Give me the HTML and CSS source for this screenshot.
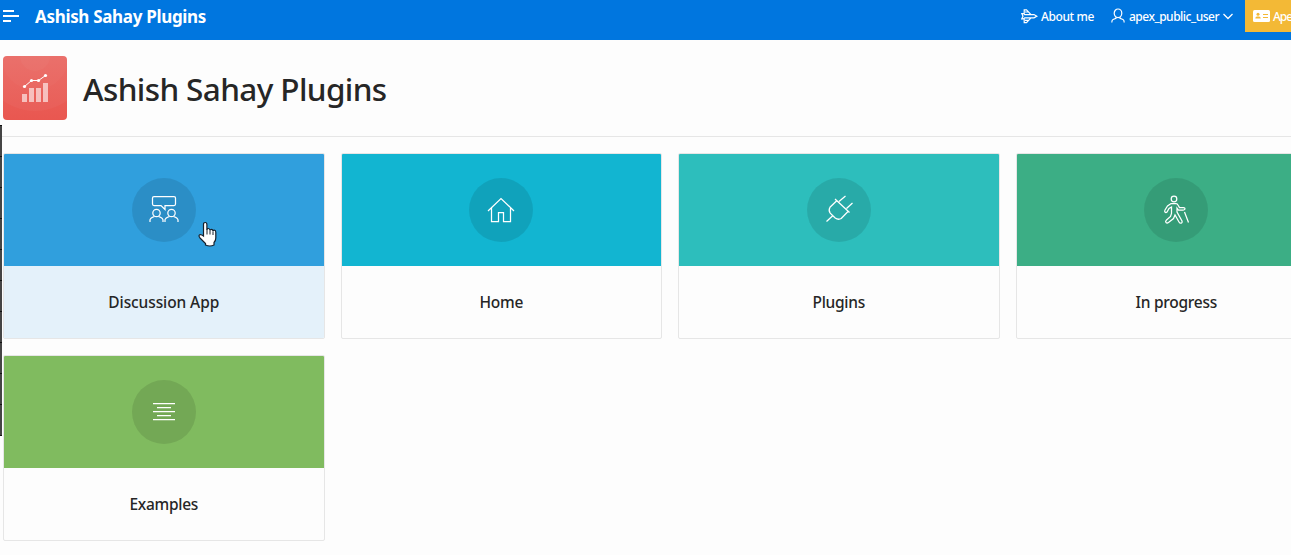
FILE: index.html
```html
<!DOCTYPE html>
<html lang="en">
<head>
<meta charset="utf-8">
<title>Ashish Sahay Plugins</title>
<link rel="stylesheet" href="styles.css">
</head>
<body>
<header class="topbar">
  <svg class="menu" width="16" height="14" viewBox="0 0 16 14"><path d="M0 2h11M0 7h16M0 12h8" stroke="#fff" stroke-width="1.8"/></svg>
  <span class="brand">Ashish Sahay Plugins</span>
  <nav class="nav">
    <span class="nav-item about">
      <svg width="17" height="16" viewBox="0 0 17 16" fill="none" stroke="#fff" stroke-width="1.2"><path d="M.8 5.600h1.700l1.300 1H13L15.800 8.200 13 9.800H3.800l-1.300 1H.8L2 8.200zM3.200 6.500V1.800h2.300L10 6.600M3.200 9.900v4.700h2.300L10 9.800M4 4h3.500M4 12.400h3.500"/></svg>
      <span class="nav-label about-label">About me</span>
    </span>
    <span class="nav-item user">
      <svg width="14" height="16" viewBox="0 0 14 16" fill="none" stroke="#fff" stroke-width="1.200"><ellipse cx="7" cy="5.300" rx="3.800" ry="4.300"/><path d="M5 9v1.300l-3 1.200Q.8 12 .8 14.500M9 9v1.300l3 1.200q1.200.5 1.200 3"/></svg>
      <span class="nav-label user-label">apex_public_user</span>
      <svg class="chevron" width="10" height="7" viewBox="0 0 10 7" fill="none" stroke="#fff" stroke-width="1.300"><path d="M.5 1 5 5.500 9.500 1"/></svg>
    </span>
    <span class="nav-item apex">
      <svg width="17" height="12" viewBox="0 0 17 12"><rect width="17" height="12" rx="1.500" fill="#fff"/><circle cx="5" cy="4.300" r="1.500" fill="#f3b936"/><path d="M2.300 8.500q0-2 1.700-2h2q1.700 0 1.700 2z" fill="#f3b936"/><path d="M10 4.500h5M10 7.500h5" stroke="#f3b936" stroke-width="1.200"/></svg>
      <span class="nav-label">Ape</span>
    </span>
  </nav>
</header>
<div class="side-edge"></div>
<section class="hero">
  <div class="app-icon">
    <svg width="64" height="64" viewBox="0 0 64 64">
      <circle cx="32" cy="0" r="55" fill="#fff" opacity=".035"/><circle cx="32" cy="0" r="34" fill="#fff" opacity=".025"/><circle cx="32" cy="0" r="15" fill="#fff" opacity=".03"/>
      <path d="M19 38h5v8h-5zM26 32h5v14h-5zM33 32h5v14h-5zM40 27h5v19h-5z" fill="#fff" opacity=".6"/>
      <path d="M21.500 30.500 28.500 24.500h7l7-5" fill="none" stroke="#fff"/>
      <g fill="#fff"><circle cx="21.500" cy="30.500" r="1.600"/><circle cx="28.500" cy="24.500" r="1.600"/><circle cx="35.500" cy="24.500" r="1.600"/><circle cx="42.500" cy="19.500" r="1.600"/></g>
    </svg>
  </div>
  <h1 class="title">Ashish Sahay Plugins</h1>
</section>
<main class="cards">
  <article class="card active">
    <div class="card-top blue"><span class="disc">
      <svg width="32" height="32" viewBox="0 0 32 32"><path d="M6 2.500h20q1.500 0 1.500 1.500v6q0 1.500-1.500 1.500H17v4l-4-4H6q-1.500 0-1.500-1.500V4q0-1.500 1.500-1.500z"/><circle cx="8.500" cy="19" r="3.700"/><circle cx="23.500" cy="19" r="3.700"/><path d="M2 28v-2q0-2 4.500-3.500M15 28v-2q0-2-4.500-3.500M17 28v-2q0-2 4.500-3.500M30 28v-2q0-2-4.500-3.500"/></svg>
    </span></div>
    <div class="card-body"><span class="label discussion">Discussion App</span></div>
  </article>
  <article class="card">
    <div class="card-top cyan"><span class="disc">
      <svg width="32" height="32" viewBox="0 0 32 32"><path d="M3 17 16 4.500 29 17M6.500 14v13.500h7v-9h5v9h7V14"/></svg>
    </span></div>
    <div class="card-body"><span class="label">Home</span></div>
  </article>
  <article class="card">
    <div class="card-top teal"><span class="disc">
      <svg width="32" height="32" viewBox="0 0 32 32"><path d="M12 5 26.500 18.500M14 6.500 7 13.200q-1.800 3 .2 6l5 4.800q3 2.200 6 .5L25 17.500M16 7.500l6.500-5.500M23.500 14.500 29.500 9M10 21.500l-6.500 6"/></svg>
    </span></div>
    <div class="card-body"><span class="label">Plugins</span></div>
  </article>
  <article class="card">
    <div class="card-top green"><span class="disc">
      <svg width="32" height="32" viewBox="0 0 32 32"><circle cx="14" cy="5" r="2.800"/><path d="M11 9.500h5q1.500 0 2 1.500l1.500 2.500h4q1.500 0 1.500 1.200t-1.500 1.300h-5L17 14v4l5 9q.5 2-1 2.200-1.200.2-2-1.200L15 21l-1.500 3.500-5 4q-1.500 1-2.500 0-1-1.200.5-2.500l4-3.500 1-3V13L9 14.500l-2 3.500q-1.200 1-2 0-.7-.8 0-2l2.500-4zM24.500 18 28.500 28.500"/></svg>
    </span></div>
    <div class="card-body"><span class="label">In progress</span></div>
  </article>
  <article class="card">
    <div class="card-top lime"><span class="disc">
      <svg width="32" height="32" viewBox="0 0 32 32"><path d="M5 7.500h22M9 11.500h14M5 15.500h22M9 19.500h14M5 23.500h22"/></svg>
    </span></div>
    <div class="card-body"><span class="label">Examples</span></div>
  </article>
</main>
<svg class="pointer" width="20" height="27" viewBox="0 0 20 27"><path d="M5.500 15V3.500q0-2 1.700-2t1.700 2V9q0-1.500 1.500-1.500T12 9.500q.2-1.200 1.500-1.200t1.500 1.900q.3-1 1.300-1 1.500 0 1.500 2V17q0 2.500-1.800 4.500V24q-4 2-8.500 0v-1.500L2 17q-1.800-2.300-.3-3.200Q3 13 5.500 15z" fill="#fff" stroke="#17202c" stroke-width="1.200"/><path d="M9 8.500v5M12 9.500v4M15 10.500v3.500" stroke="#17202c"/></svg>
</body>
</html>
```
FILE: styles.css
```css
* { box-sizing: border-box; }
body {
  margin: 0;
  width: 1291px;
  height: 555px;
  overflow: hidden;
  position: relative;
  background: #fdfdfd;
  color: #262626;
  font-family: "Noto Sans", "Open Sans", sans-serif;
}
svg { display: block; flex: none; }
.topbar {
  height: 40px;
  padding: 0 0 8px 3px;
  display: flex;
  align-items: center;
  background: #0076df;
  color: #fff;
}
.brand {
  margin-left: 16px;
  padding-top: 2px;
  font-size: 17px;
  font-weight: 700;
  line-height: 30px;
  letter-spacing: -.32px;
  white-space: nowrap;
}
.nav {
  margin-left: auto;
  width: 270px;
  height: 32px;
  flex: none;
  display: flex;
  overflow: hidden;
}
.nav-item {
  flex: none;
  display: flex;
  align-items: center;
  height: 32px;
}
.nav-label {
  padding-top: 2px;
  font-size: 12px;
  font-weight: 500;
  line-height: 30px;
  letter-spacing: -.4px;
  white-space: nowrap;
}
.about { width: 90px; gap: 3px; }
.user { width: 134px; gap: 4px; }
.user-label { letter-spacing: -.5px; }
.apex {
  width: 46px;
  padding-left: 8px;
  gap: 3px;
  background: #f3b936;
}
.apex .nav-label { letter-spacing: -1px; }
.side-edge {
  position: absolute;
  left: 0;
  top: 125px;
  width: 2px;
  height: 311px;
  background: linear-gradient(#111 1px, #454545 1px) 0 0 / 2px 31px;
}
.hero {
  height: 97px;
  padding: 16px 0 16px 3px;
  display: flex;
  align-items: center;
  gap: 16px;
  border-bottom: 1px solid #e6e6e6;
}
.app-icon {
  width: 64px;
  height: 64px;
  border-radius: 4px;
  overflow: hidden;
  background: linear-gradient(#ea6863, #e95750);
}
.title {
  margin: 0;
  padding-top: 2px;
  font-size: 31.5px;
  font-weight: 500;
  line-height: 46px;
  letter-spacing: -.62px;
  white-space: nowrap;
}
.cards {
  width: 1334px;
  padding: 16px 0 0 3px;
  display: grid;
  grid-template-columns: repeat(4, 321.5px);
  gap: 16px;
}
.card {
  height: 186px;
  border: 1px solid #e6e6e6;
  border-radius: 2px;
  overflow: hidden;
}
.card-top {
  height: 112px;
  display: flex;
  align-items: center;
  justify-content: center;
}
.blue { background: #309fdd; }
.cyan { background: #12b5d1; }
.teal { background: #2dbebc; }
.green { background: #3cae85; }
.lime { background: #80bb5f; }
.disc {
  width: 64px;
  height: 64px;
  border-radius: 50%;
  display: flex;
  align-items: center;
  justify-content: center;
  background: rgba(0, 0, 0, .1);
}
.disc svg {
  fill: none;
  stroke: #fff;
  stroke-width: 1.25;
}
.card-body {
  height: 72px;
  display: flex;
  align-items: center;
  justify-content: center;
}
.active .card-body { background: #e4f1fa; }
.label {
  font-size: 15.5px;
  font-weight: 500;
  line-height: 24px;
  letter-spacing: -.28px;
}
.discussion { letter-spacing: -.1px; }
.pointer {
  position: absolute;
  left: 198px;
  top: 221px;
}
```
